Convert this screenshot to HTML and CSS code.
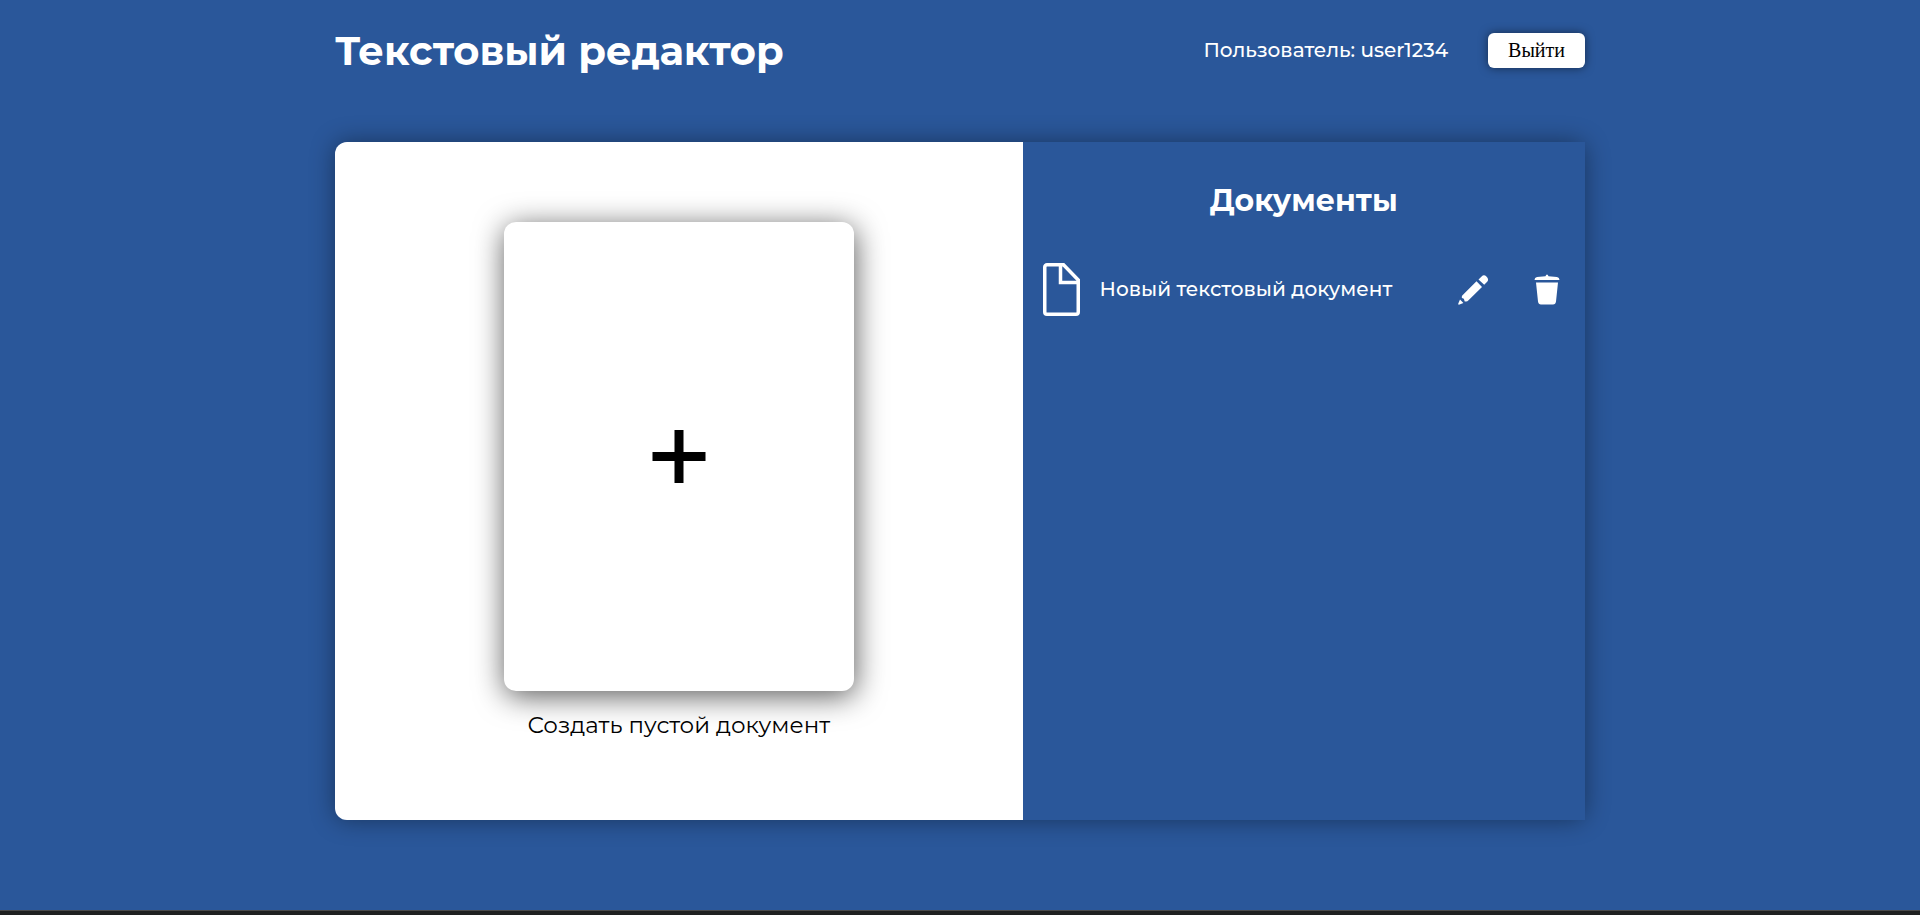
FILE: index.html
```
<!DOCTYPE html>
<html lang="ru">
<head>
<meta charset="utf-8">
<title>Текстовый редактор</title>
<link rel="stylesheet" href="styles.css">
</head>
<body>
<div class="page">
  <header class="header">
    <h1 class="title">Текстовый редактор</h1>
    <div class="account">
      <span class="user">Пользователь: user1234</span>
      <button class="logout" type="button">Выйти</button>
    </div>
  </header>
  <main class="panel">
    <section class="create">
      <button class="new-doc" type="button" aria-labelledby="new-label">
        <svg class="plus" viewBox="0 0 54 54" aria-hidden="true"><path d="M22.500 0h9v22h22v9h-22v22h-9V31h-22v-9h22z"/></svg>
      </button>
      <p class="new-label" id="new-label">Создать пустой документ</p>
    </section>
    <section class="documents">
      <h2 class="subtitle">Документы</h2>
      <ul class="list">
        <li class="item">
          <a class="doc-link" href="#">
            <svg class="file" viewBox="0 0 37 53" aria-hidden="true"><path d="M4 1.750h16.500L35.250 17v32a2.250 2.250 0 0 1-2.250 2.250H4A2.250 2.250 0 0 1 1.750 49V4A2.250 2.250 0 0 1 4 1.750zM17.500 2v17.500h18"/></svg>
            <span class="doc-name">Новый текстовый документ</span>
          </a>
          <button class="action" type="button" aria-label="Редактировать">
            <svg viewBox="0 0 32 32" aria-hidden="true"><path d="M21.500 5.500 24.600 2.400Q27 .300 29.400 2.500Q32.300 5.300 30.200 7.800L27.200 10.800zM19.500 7.300 25 13 11.500 26.200Q10 28.300 7.400 27.200Q7.800 24.500 5 24Q4.200 22.300 6 20.800zM3 25.500 6.400 28.900 2.500 30.500Q1 31 1.300 29.500z"/></svg>
          </button>
          <button class="action" type="button" aria-label="Удалить">
            <svg viewBox="0 0 32 32" aria-hidden="true"><path d="M3.500 6Q3.500 3.300 6 3L14.500 2.200Q15 .600 16 .600T17.500 2.200L26 3Q28.500 3.300 28.500 6zM5 8.500H27L25 27.500Q24.600 30.500 22 30.500H10Q7.400 30.500 7 27.500z"/></svg>
          </button>
        </li>
      </ul>
    </section>
  </main>
</div>
<footer class="strip"></footer>
</body>
</html>
```

FILE: styles.css
```
* { box-sizing: border-box; }
body {
  margin: 0;
  min-height: 100vh;
  display: flex;
  flex-direction: column;
  background: #2a579a;
  color: #fff;
  font-family: Montserrat, "Noto Sans", sans-serif;
}
h1, h2, p, ul { margin: 0; padding: 0; }
button { border: 0; padding: 0; font: inherit; cursor: pointer; }
.page {
  flex: 1;
  width: 100%;
  max-width: 1250px;
  margin: 0 auto;
  padding: 26px 0 90px;
  display: flex;
  flex-direction: column;
  gap: 67px;
}
.header { display: flex; justify-content: space-between; align-items: center; }
.title { font-size: 40px; line-height: 49px; font-weight: 700; }
.account { display: flex; align-items: center; gap: 40px; }
.user { font-size: 20px; line-height: 25px; font-weight: 500; }
.logout {
  padding: 7px 20px;
  border-radius: 6px;
  background: #fff;
  color: #000;
  box-shadow: 0 0 10px rgba(0, 0, 0, .5);
  font: 20px/21px "Liberation Serif", serif;
}
.panel {
  flex: 1;
  display: grid;
  grid-template-columns: 55fr 45fr;
  border-radius: 12px;
  box-shadow: 0 0 25px rgba(0, 0, 0, .4);
}
.create {
  padding: 80px 20px;
  display: flex;
  flex-direction: column;
  align-items: center;
  gap: 20px;
  border-radius: 12px 0 0 12px;
  background: #fff;
  color: #000;
}
.new-doc {
  flex: 1;
  max-height: 469px;
  width: 350px;
  max-width: 100%;
  display: grid;
  place-items: center;
  border-radius: 12px;
  background: #fff;
  box-shadow: 1px 5px 30px rgba(0, 0, 0, .65);
}
.plus { width: 54px; height: 54px; }
.new-label { font-size: 23px; line-height: 28px; }
.documents { padding: 40px 20px; background: #2a579a; }
.subtitle { font-size: 30px; line-height: 38px; text-align: center; }
.list { padding-top: 43px; list-style: none; }
.item { display: flex; align-items: center; gap: 42px; padding-right: 2px; }
.doc-link { flex: 1; display: flex; align-items: center; gap: 20px; color: inherit; text-decoration: none; }
.doc-name { font-size: 20px; line-height: 25px; font-weight: 500; }
.file { width: 37px; height: 53px; fill: none; stroke: #fff; stroke-width: 3.5; }
.action { width: 32px; height: 32px; background: none; color: #fff; }
.action svg { display: block; width: 32px; height: 32px; fill: currentColor; }
.strip { height: 5px; background: #1f2020; border-top: 1px solid #4a4a4a; }
```
